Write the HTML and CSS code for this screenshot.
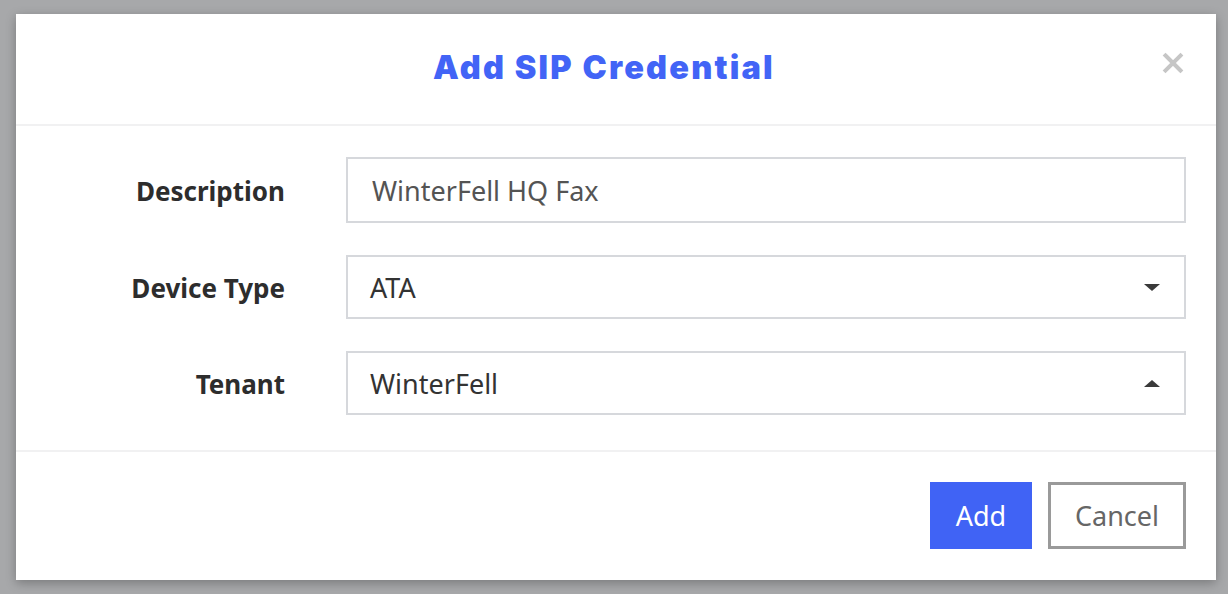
FILE: index.html
```html
<!DOCTYPE html>
<html lang="en">
<head>
<meta charset="utf-8">
<title>Add SIP Credential</title>
<link rel="stylesheet" href="styles.css">
</head>
<body>
<div class="modal">
  <div class="modal-header">
    <h1 class="modal-title">Add SIP Credential</h1>
    <button class="close" aria-label="Close">
      <svg width="20" height="20" viewBox="0 0 20 20"><path d="M2.5 2.5L17.5 17.5M17.5 2.5L2.5 17.5" stroke="#c6c6c6" stroke-width="4" stroke-linecap="square"/></svg>
    </button>
  </div>
  <form class="modal-body">
    <label class="label" for="desc">Description</label>
    <div class="field field-input"><input id="desc" class="input" type="text" value="WinterFell HQ Fax"></div>

    <label class="label">Device Type</label>
    <div class="field field-select">
      <span class="value">ATA</span>
      <span class="caret caret-down"></span>
    </div>

    <label class="label">Tenant</label>
    <div class="field field-select">
      <span class="value">WinterFell</span>
      <span class="caret caret-up"></span>
    </div>
  </form>
  <div class="modal-footer">
    <button class="btn btn-primary">Add</button>
    <button class="btn btn-secondary">Cancel</button>
  </div>
</div>
</body>
</html>
```

FILE: styles.css
```css
* { box-sizing: border-box; }

html, body {
  margin: 0;
  height: 100%;
}

body {
  background: #a7a8aa;
  padding: 14px 12px 14px 16px;
  font-family: "Noto Sans", "Open Sans", sans-serif;
}

.modal {
  width: 1200px;
  height: 566px;
  background: #ffffff;
  box-shadow: 0 3px 10px rgba(0, 0, 0, 0.28);
  display: flex;
  flex-direction: column;
}

.modal-header {
  position: relative;
  height: 112px;
  border-bottom: 2px solid #f1f1f2;
  display: flex;
  align-items: center;
  justify-content: center;
  padding-right: 24px;
}

.modal-title {
  margin: 0;
  font-family: "Inter", "Lato", sans-serif;
  font-weight: 900;
  font-size: 32.5px;
  letter-spacing: 2.2px;
  color: #4264f6;
  line-height: 1;
  padding-bottom: 2px;
}

.close {
  position: absolute;
  top: 39px;
  right: 33px;
  width: 20px;
  height: 20px;
  padding: 0;
  border: 0;
  background: transparent;
  display: block;
}

.close svg { display: block; overflow: visible; }

.modal-body {
  margin: 0;
  flex: 1;
  display: grid;
  grid-template-columns: 269px 840px;
  grid-template-rows: 66px 64px 64px;
  column-gap: 61px;
  row-gap: 32px;
  padding: 31px 0 0 0;
  align-content: start;
  border-bottom: 2px solid #f1f1f2;
}

.label {
  justify-self: end;
  align-self: center;
  font-weight: 700;
  font-size: 26px;
  color: #2d2d2d;
  padding-top: 1px;
}

.field {
  border: 2px solid #d6d8dc;
  display: flex;
  align-items: center;
  height: 100%;
}

.input {
  width: 100%;
  height: 100%;
  border: 0;
  outline: none;
  padding: 0 0 0 24px;
  font-family: inherit;
  font-size: 27px;
  color: #545454;
  background: transparent;
}

.field-select {
  padding: 0 24px 0 22px;
  justify-content: space-between;
}

.value {
  font-size: 27px;
  color: #333333;
}

.caret {
  width: 0;
  height: 0;
  border-left: 8px solid transparent;
  border-right: 8px solid transparent;
}

.caret-down { border-top: 7px solid #3a3a3a; }
.caret-up { border-bottom: 7px solid #3a3a3a; }

.modal-footer {
  height: 128px;
  display: flex;
  justify-content: flex-end;
  align-items: flex-start;
  gap: 16px;
  padding: 30px 30px 0 0;
}

.btn {
  height: 67px;
  font-family: "Noto Sans", "Open Sans", sans-serif;
  font-size: 27px;
  padding: 0;
  cursor: pointer;
}

.btn-primary {
  width: 102px;
  background: #4063f5;
  color: #ffffff;
  border: 0;
}

.btn-secondary {
  width: 138px;
  background: #ffffff;
  color: #666666;
  border: 3px solid #9a9a9a;
}
```
